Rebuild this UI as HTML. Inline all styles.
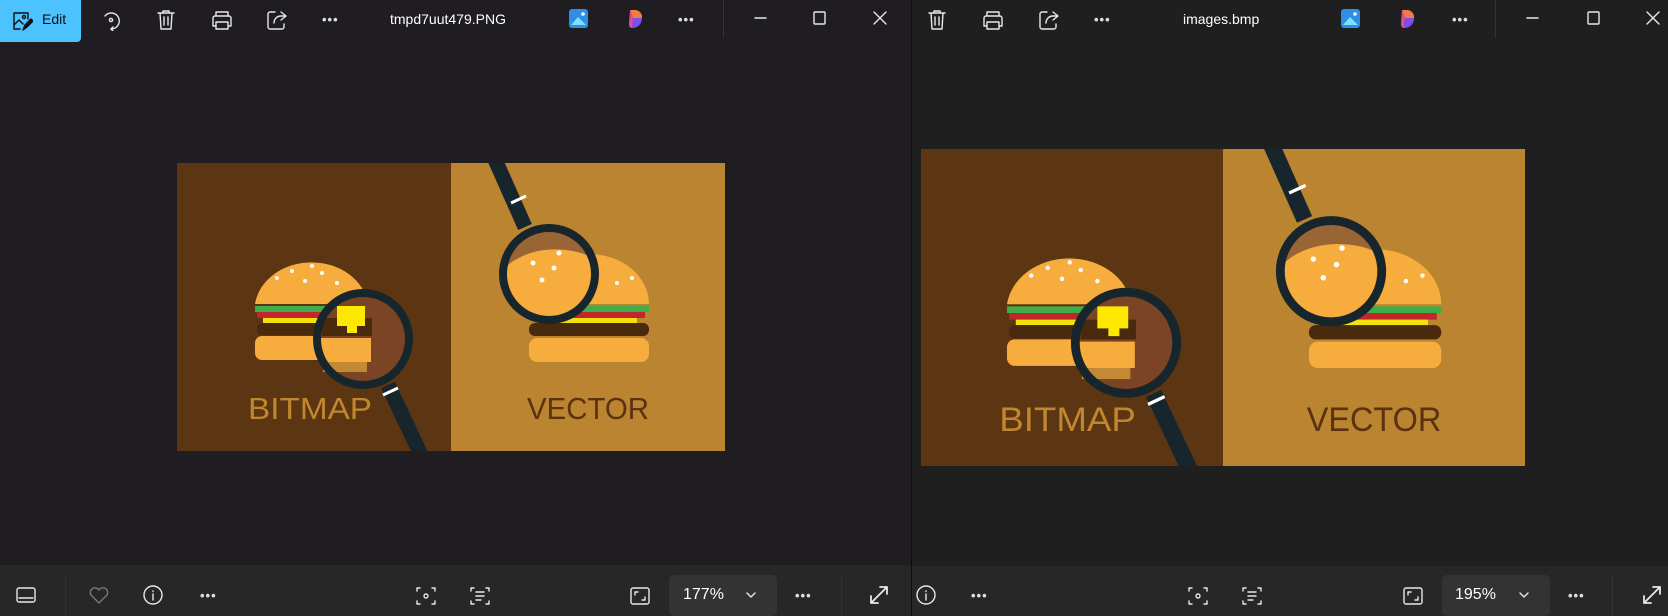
<!DOCTYPE html>
<html><head><meta charset="utf-8"><style>
*{margin:0;padding:0;box-sizing:border-box}
body{width:1668px;height:616px;overflow:hidden;background:#1f1f1f;font-family:"Liberation Sans",sans-serif;position:relative;color:#fff}
.a{position:absolute}
svg.i{position:absolute;fill:none;stroke:#e8e8e8;stroke-width:1.4;stroke-linecap:round;stroke-linejoin:round}
.t{position:absolute;font-size:14px;color:#fff;top:11px}
.dots{position:absolute;font-size:13px;color:#ddd;letter-spacing:1px;font-weight:bold}
</style></head><body>
<div class="a" style="left:0;top:0;width:911px;height:565px;background:#1f1c22"></div>
<div class="a" style="left:0;top:565px;width:911px;height:51px;background:#272727"></div>
<div class="a" style="left:911px;top:0;width:1px;height:616px;background:#0e0e0e"></div>
<div class="a" style="left:912px;top:0;width:756px;height:566px;background:#1f1f1f"></div>
<div class="a" style="left:912px;top:566px;width:756px;height:50px;background:#272727"></div>

<div class="a" style="left:0;top:0;width:81px;height:42px;background:#4cc2ff;border-radius:0 0 4px 0"></div>
<svg class="i" style="left:11px;top:10px;stroke:#111" width="22" height="22" viewBox="0 0 22 22"><path d="M9 19H3V3h14v6"/><circle cx="13" cy="7" r="1.5"/><path d="M3 15l5-5 4 4"/><path d="M12 20l2-5 6-6 2 2-6 6z" fill="#111"/></svg>
<div class="t" style="left:42px;color:#111">Edit</div>

<svg class="i" style="left:100px;top:9px" width="22" height="22" viewBox="0 0 22 22"><path d="M5 7a8 8 0 1 1 6 13"/><path d="M11 20l2-2M11 20l2 2"/><circle cx="11" cy="11" r="1.6"/></svg>
<svg class="i" style="left:156px;top:9px" width="20" height="22" viewBox="0 0 20 22"><path d="M2 4h16M7 4V2h6v2M4 4l1 16h10l1-16M8 8v8M12 8v8"/></svg>
<svg class="i" style="left:210px;top:9px" width="24" height="22" viewBox="0 0 24 22"><path d="M6 7V3h12v4M3 17V9a2 2 0 0 1 2-2h14a2 2 0 0 1 2 2v8h-3M6 17H3M6 13h12v7H6z"/></svg>
<svg class="i" style="left:266px;top:9px" width="22" height="22" viewBox="0 0 22 22"><path d="M9 3H4a2 2 0 0 0-2 2v13a2 2 0 0 0 2 2h12a2 2 0 0 0 2-2v-3"/><path d="M15 3l5 4-5 4M20 7h-5c-4 0-7 3-7 7"/></svg>
<div class="dots" style="left:322px;top:12px">•••</div>
<div class="t" style="left:390px">tmpd7uut479.PNG</div>
<svg class="a" style="left:569px;top:9px" width="19" height="19" viewBox="0 0 19 19"><rect width="19" height="19" rx="3" fill="#2f8fe6"/><path d="M2 16l7-8 8 8z" fill="#7ee0ff"/><circle cx="14" cy="5" r="1.8" fill="#fff"/></svg>
<svg class="a" style="left:626px;top:9px" width="18" height="20" viewBox="0 0 18 20"><path d="M4 1h5a7 7 0 0 1 7 8H7L4 1z" fill="#f27a45"/><path d="M7 9h9c0 6-4 10-10 10l1-10z" fill="#7b4ef0"/><path d="M4 1l3 8-1 10c-3 0-3-3-3-5z" fill="#d9509a"/></svg>
<div class="dots" style="left:678px;top:12px">•••</div>
<div class="a" style="left:723px;top:0;width:1px;height:38px;background:#333"></div>
<svg class="i" style="left:754px;top:8px" width="14" height="20"><path d="M1 10h11"/></svg>
<svg class="i" style="left:812px;top:8px" width="16" height="20"><rect x="2" y="4" width="11" height="12" rx="1"/></svg>
<svg class="i" style="left:872px;top:8px" width="16" height="20"><path d="M2 4l12 12M14 4L2 16"/></svg>

<svg class="i" style="left:927px;top:9px" width="20" height="22" viewBox="0 0 20 22"><path d="M2 4h16M7 4V2h6v2M4 4l1 16h10l1-16M8 8v8M12 8v8"/></svg>
<svg class="i" style="left:981px;top:9px" width="24" height="22" viewBox="0 0 24 22"><path d="M6 7V3h12v4M3 17V9a2 2 0 0 1 2-2h14a2 2 0 0 1 2 2v8h-3M6 17H3M6 13h12v7H6z"/></svg>
<svg class="i" style="left:1038px;top:9px" width="22" height="22" viewBox="0 0 22 22"><path d="M9 3H4a2 2 0 0 0-2 2v13a2 2 0 0 0 2 2h12a2 2 0 0 0 2-2v-3"/><path d="M15 3l5 4-5 4M20 7h-5c-4 0-7 3-7 7"/></svg>
<div class="dots" style="left:1094px;top:12px">•••</div>
<div class="t" style="left:1183px">images.bmp</div>
<svg class="a" style="left:1341px;top:9px" width="19" height="19" viewBox="0 0 19 19"><rect width="19" height="19" rx="3" fill="#2f8fe6"/><path d="M2 16l7-8 8 8z" fill="#7ee0ff"/><circle cx="14" cy="5" r="1.8" fill="#fff"/></svg>
<svg class="a" style="left:1398px;top:9px" width="18" height="20" viewBox="0 0 18 20"><path d="M4 1h5a7 7 0 0 1 7 8H7L4 1z" fill="#f27a45"/><path d="M7 9h9c0 6-4 10-10 10l1-10z" fill="#7b4ef0"/><path d="M4 1l3 8-1 10c-3 0-3-3-3-5z" fill="#d9509a"/></svg>
<div class="dots" style="left:1452px;top:12px">•••</div>
<div class="a" style="left:1495px;top:0;width:1px;height:38px;background:#333"></div>
<svg class="i" style="left:1526px;top:8px" width="14" height="20"><path d="M1 10h11"/></svg>
<svg class="i" style="left:1586px;top:8px" width="16" height="20"><rect x="2" y="4" width="11" height="12" rx="1"/></svg>
<svg class="i" style="left:1645px;top:8px" width="16" height="20"><path d="M2 4l12 12M14 4L2 16"/></svg>

<svg class="a" style="left:177px;top:163px" width="548" height="288" viewBox="0 0 548 288" preserveAspectRatio="none">
<g id="art">
<rect width="274" height="288" fill="#5c3512"/><rect x="274" width="274" height="288" fill="#ba8430"/>
<path d="M78 141a57 48 0 0 1 113 0z" fill="#f7ad3d"/>
<rect x="78" y="143" width="113" height="6" fill="#3fae49"/>
<rect x="80" y="149" width="108" height="6" fill="#c0262a"/>
<rect x="86" y="155" width="90" height="5" fill="#f4e00b"/>
<rect x="80" y="160" width="110" height="12" rx="5" fill="#4a2a0d"/>
<rect x="78" y="173" width="113" height="24" rx="7" fill="#f7ad3d"/>
<circle cx="186" cy="176" r="45" fill="#7a4425"/>
<rect x="145" y="155" width="50" height="18" fill="#4a2a0d"/>
<rect x="160" y="143" width="28" height="20" fill="#fde800"/><rect x="170" y="158" width="10" height="12" fill="#fde800"/>
<rect x="142" y="175" width="52" height="24" fill="#f7ad3d"/><rect x="146" y="199" width="44" height="10" fill="#c48a33"/>
<circle cx="186" cy="176" r="46" fill="none" stroke="#17252d" stroke-width="8"/>
<path d="M211 222L244 292" stroke="#17252d" stroke-width="15"/><path d="M206 232l15-7" stroke="#fff" stroke-width="3"/>
<text x="71" y="256" font-family="Liberation Sans,sans-serif" font-size="31" fill="#c0872f" textLength="124" lengthAdjust="spacingAndGlyphs">BITMAP</text>
<path d="M352 141a60 50 0 0 1 120 0z" fill="#f7ad3d"/>
<rect x="352" y="143" width="120" height="6" fill="#3fae49"/>
<rect x="356" y="149" width="112" height="6" fill="#c0262a"/>
<rect x="370" y="155" width="90" height="5" fill="#f4e00b"/>
<rect x="352" y="160" width="120" height="13" rx="6" fill="#4a2a0d"/>
<rect x="352" y="175" width="120" height="24" rx="8" fill="#f7ad3d"/>
<circle cx="372" cy="111" r="45" fill="#f7ad3d"/>
<path d="M328 105a45 45 0 0 1 88-10a60 40 0 0 0-88 10z" fill="#9a6535"/>
<g fill="#fff"><circle cx="356" cy="100" r="2.5"/><circle cx="377" cy="105" r="2.5"/><circle cx="365" cy="117" r="2.5"/><circle cx="382" cy="90" r="2.5"/></g>
<circle cx="372" cy="111" r="46" fill="none" stroke="#17252d" stroke-width="8"/>
<path d="M316 -8L348 64" stroke="#17252d" stroke-width="15"/><path d="M334 40l15-7" stroke="#fff" stroke-width="3"/>
<text x="350" y="256" font-family="Liberation Sans,sans-serif" font-size="31" fill="#5a3210" textLength="122" lengthAdjust="spacingAndGlyphs">VECTOR</text>
<g fill="#fff"><circle cx="100" cy="115" r="2"/><circle cx="115" cy="108" r="2"/><circle cx="128" cy="118" r="2"/><circle cx="145" cy="110" r="2"/><circle cx="160" cy="120" r="2"/><circle cx="135" cy="103" r="2"/><circle cx="440" cy="120" r="2"/><circle cx="455" cy="115" r="2"/></g>
</g></svg>
<svg class="a" style="left:921px;top:149px" width="604" height="317" viewBox="0 0 548 288" preserveAspectRatio="none"><use href="#art"/></svg>

<svg class="i" style="left:15px;top:585px" width="22" height="20"><rect x="2" y="3" width="18" height="14" rx="2"/><path d="M4 13h14"/></svg>
<div class="a" style="left:65px;top:575px;width:1px;height:41px;background:#333"></div>
<svg class="i" style="left:88px;top:585px;stroke:#777" width="22" height="20"><path d="M11 18L3 10a4.5 4.5 0 0 1 8-5 4.5 4.5 0 0 1 8 5z"/></svg>
<svg class="i" style="left:142px;top:584px" width="22" height="22"><circle cx="11" cy="11" r="9"/><path d="M11 10v6M11 7v.5"/></svg>
<div class="dots" style="left:200px;top:588px">•••</div>
<svg class="i" style="left:415px;top:585px" width="22" height="22"><path d="M2 6V3h3M17 3h3v3M20 16v3h-3M5 19H2v-3"/><circle cx="11" cy="11" r="2"/></svg>
<svg class="i" style="left:469px;top:585px" width="22" height="22"><path d="M2 6V3h3M17 3h3v3M20 16v3h-3M5 19H2v-3M7 7h8M7 11h8M7 15h5"/></svg>
<svg class="i" style="left:629px;top:585px" width="22" height="22"><rect x="2" y="3" width="18" height="16" rx="2"/><path d="M6 7v3M6 7h3M16 15v-3M16 15h-3"/></svg>
<div class="a" style="left:669px;top:575px;width:108px;height:41px;background:#333;border-radius:5px"></div>
<div class="a" style="left:683px;top:586px;font-size:16px">177%</div>
<svg class="i" style="left:745px;top:590px" width="12" height="10"><path d="M2 3l4 4 4-4"/></svg>
<div class="dots" style="left:795px;top:588px">•••</div>
<div class="a" style="left:841px;top:575px;width:1px;height:41px;background:#333"></div>
<svg class="i" style="left:868px;top:584px;stroke-width:1.8" width="22" height="22"><path d="M3 19L19 3M12 3h7v7M3 12v7h7"/></svg>

<svg class="i" style="left:915px;top:584px" width="22" height="22"><circle cx="11" cy="11" r="9"/><path d="M11 10v6M11 7v.5"/></svg>
<div class="dots" style="left:971px;top:588px">•••</div>
<svg class="i" style="left:1187px;top:585px" width="22" height="22"><path d="M2 6V3h3M17 3h3v3M20 16v3h-3M5 19H2v-3"/><circle cx="11" cy="11" r="2"/></svg>
<svg class="i" style="left:1241px;top:585px" width="22" height="22"><path d="M2 6V3h3M17 3h3v3M20 16v3h-3M5 19H2v-3M7 7h8M7 11h8M7 15h5"/></svg>
<svg class="i" style="left:1402px;top:585px" width="22" height="22"><rect x="2" y="3" width="18" height="16" rx="2"/><path d="M6 7v3M6 7h3M16 15v-3M16 15h-3"/></svg>
<div class="a" style="left:1442px;top:575px;width:108px;height:41px;background:#333;border-radius:5px"></div>
<div class="a" style="left:1455px;top:586px;font-size:16px">195%</div>
<svg class="i" style="left:1518px;top:590px" width="12" height="10"><path d="M2 3l4 4 4-4"/></svg>
<div class="dots" style="left:1568px;top:588px">•••</div>
<div class="a" style="left:1612px;top:575px;width:1px;height:41px;background:#333"></div>
<svg class="i" style="left:1641px;top:584px;stroke-width:1.8" width="22" height="22"><path d="M3 19L19 3M12 3h7v7M3 12v7h7"/></svg>
</body></html>
